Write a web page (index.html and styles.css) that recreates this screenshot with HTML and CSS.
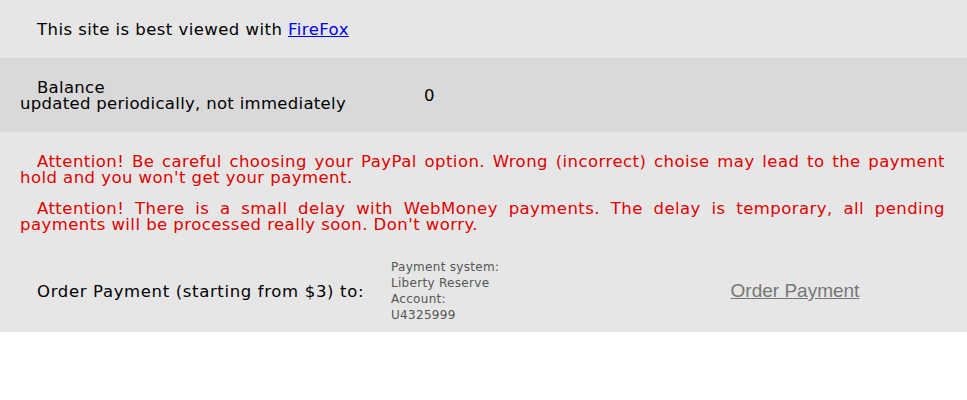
FILE: index.html
```html
<!DOCTYPE html>
<html lang="en">
<head>
  <meta charset="UTF-8" />
  <title>Payments</title>
  <link rel="stylesheet" href="styles.css">
</head>
<body>
  <div class="notice">
    <p class="indent">This site is best viewed with <a href="#">FireFox</a></p>
  </div>

  <div class="balance">
    <div class="balance-label">
      <p class="indent">Balance<br>updated periodically, not immediately</p>
    </div>
    <div class="balance-value">0</div>
  </div>

  <div class="payments">
    <p class="warn indent">Attention! Be careful choosing your PayPal option. Wrong (incorrect) choise may lead to the payment hold and you won't get your payment.</p>
    <p class="warn indent">Attention! There is a small delay with WebMoney payments. The delay is temporary, all pending payments will be processed really soon. Don't worry.</p>

    <div class="order">
      <div class="order-label indent">Order Payment (starting from $3) to:</div>
      <div class="order-system">
        Payment system:<br>
        Liberty Reserve<br>
        Account:<br>
        U4325999
      </div>
      <div class="order-action"><a href="#">Order Payment</a></div>
    </div>
  </div>
</body>
</html>
```

FILE: styles.css
```css
body {
  margin: 0;
  font-family: 'DejaVu Sans', Verdana, sans-serif;
  font-size: 16.5px;
  letter-spacing: 0.45px;
  color: #000;
  background: #fff;
}
p {
  margin: 0;
}
.indent {
  text-indent: 17px;
}
.notice {
  background: #e6e6e6;
  height: 58px;
  padding: 0 20px;
  display: flex;
  align-items: center;
}
.notice a {
  color: #0000ee;
}
.balance {
  background: #d9d9d9;
  height: 74px;
  padding: 0 20px;
  display: flex;
  align-items: center;
}
.balance-label {
  width: 404px;
  line-height: 16px;
  padding-top: 2px;
  letter-spacing: 0.3px;
}
.balance-value {
  padding-top: 1px;
}
.payments {
  background: #e6e6e6;
  padding: 22px 22px 9px 20px;
}
.warn {
  color: #e00000;
  text-align: justify;
  line-height: 16px;
  margin-bottom: 15px;
}
.order {
  display: flex;
  align-items: center;
  padding-top: 11px;
}
.order-label {
  width: 371px;
  letter-spacing: 0.65px;
}
.order-system {
  width: 254px;
  font-size: 12px;
  letter-spacing: 0.3px;
  line-height: 16px;
  color: #555;
}
.order-action {
  flex: 1;
  text-align: center;
  font-family: 'Liberation Sans', Arial, sans-serif;
  font-size: 19px;
  letter-spacing: 0;
}
.order-action a {
  color: #777;
}
```
